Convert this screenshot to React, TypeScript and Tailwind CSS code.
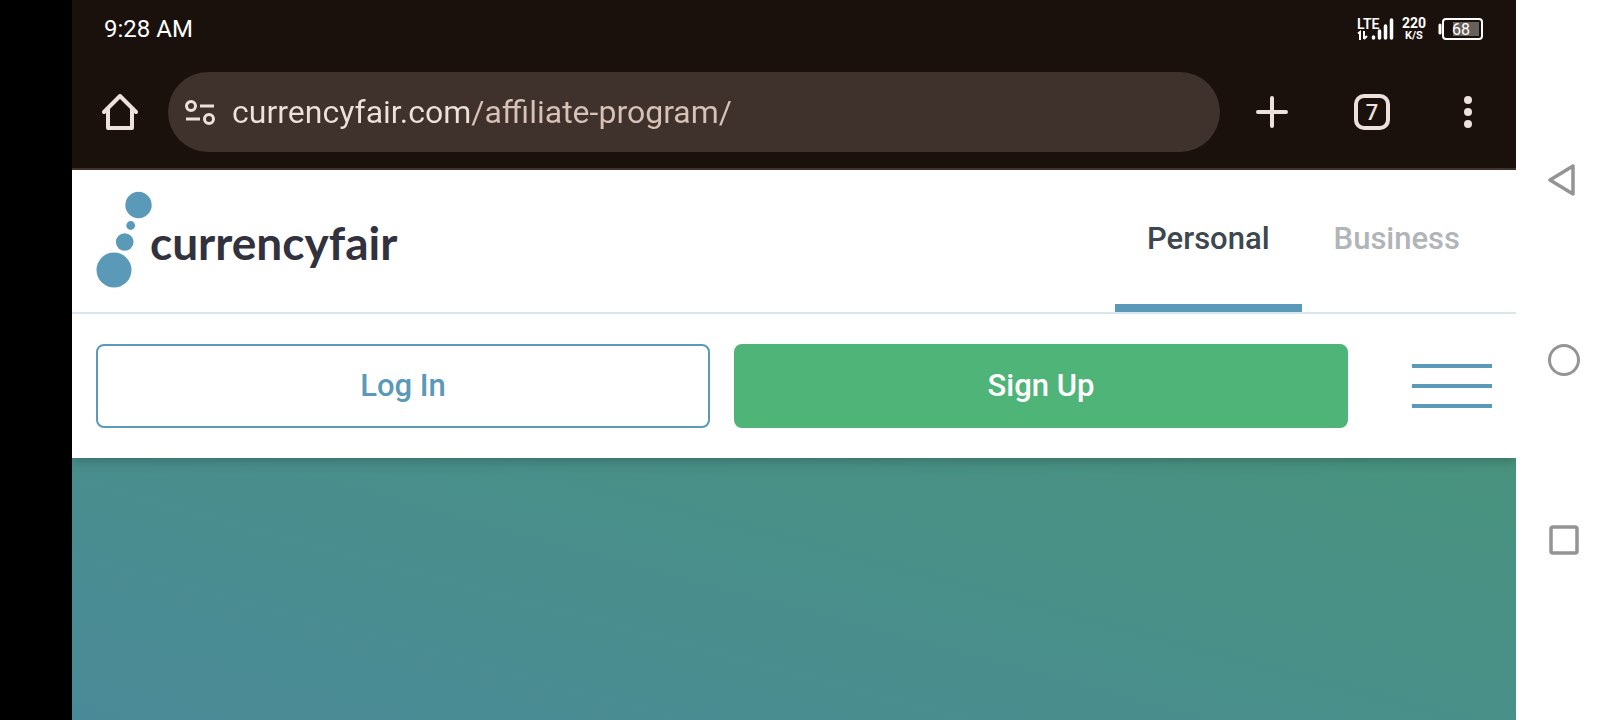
import React, { useState } from 'react';

type Account = 'Personal' | 'Business';

const accounts: Account[] = ['Personal', 'Business'];

const StatusBar: React.FC = () => (
  <div className="flex h-14 items-center justify-between px-8 pt-0.5 text-white">
    <span className="text-2xl">9:28 AM</span>
    <div className="flex items-center gap-2">
      <svg width="38" height="26" viewBox="0 0 38 26" aria-label="LTE signal">
        <text x="1" y="13" fill="#fff" fontSize="14" fontWeight="600" className="font-['Roboto',sans-serif]">LTE</text>
        <g stroke="#fff" strokeWidth="2" fill="none">
          <path d="M2 17.500l2-1.500v8M8 15v8M11 20l-3 3" />
        </g>
        <g stroke="#fff" strokeWidth="3.500" strokeLinecap="round">
          <path d="M17.500 21v1M23.500 15v7M29.500 10v12M35.500 4v18" />
        </g>
      </svg>
      <div className="flex flex-col items-center font-bold">
        <span className="text-[14px] leading-[13px]">220</span>
        <span className="text-[11px] leading-[11px]">K/S</span>
      </div>
      <svg width="46" height="24" viewBox="0 0 46 24" aria-label="Battery 68%" className="ml-1">
        <path d="M2 8v8" stroke="#fff" strokeWidth="3" strokeLinecap="round" />
        <rect x="5" y="2" width="39" height="20" rx="3" fill="none" stroke="#fff" strokeWidth="2" />
        <rect x="15" y="5" width="26" height="14" fill="#675f5c" />
        <text x="23" y="18" fill="#fff" fontSize="16" textAnchor="middle" className="font-['Roboto',sans-serif]">68</text>
      </svg>
    </div>
  </div>
);

const BrowserBar: React.FC = () => {
  const [url, setUrl] = useState<string>('currencyfair.com/affiliate-program/');

  return (
    <div className="flex items-center border-b-2 border-[#40322b] py-4 text-[#eee0db]">
      <button type="button" aria-label="Home" className="flex w-24 justify-center">
        <svg width="36" height="36" viewBox="0 0 36 36" fill="none" stroke="currentColor" strokeWidth="4" strokeLinecap="round" strokeLinejoin="round">
          <path d="M2 18L18 2l16 16M6 15v19h24V15" />
        </svg>
      </button>
      <div className="flex h-20 flex-1 items-center gap-4 rounded-full bg-[#3f312b] pl-4 pr-8">
        <svg width="32" height="28" viewBox="0 0 32 28" fill="none" stroke="currentColor" strokeWidth="3" aria-hidden="true">
          <circle cx="7" cy="8" r="4.500" />
          <path d="M16 8h14M2 21h14" />
          <circle cx="25" cy="21" r="4.500" />
        </svg>
        {/* the host is drawn lighter than the path */}
        <input
          type="text"
          aria-label="Address"
          value={url}
          onChange={(e) => setUrl(e.target.value)}
          className="h-12 min-w-0 flex-1 bg-[linear-gradient(90deg,#eee0db_240px,#d8c2b8_240px)] bg-clip-text text-[32px] text-transparent caret-white outline-none"
        />
      </div>
      <div className="flex w-[296px] items-center justify-between px-9">
        <button type="button" aria-label="New tab">
          <svg width="32" height="32" viewBox="0 0 32 32" stroke="currentColor" strokeWidth="4" strokeLinecap="round">
            <path d="M16 2v28M2 16h28" />
          </svg>
        </button>
        <button type="button" aria-label="Switch tabs" className="flex size-9 items-center justify-center rounded-[10px] border-4 border-current text-[22px] font-medium">
          7
        </button>
        <button type="button" aria-label="More options" className="flex w-6 justify-center">
          <svg width="12" height="32" viewBox="0 0 12 32" fill="currentColor">
            <circle cx="6" cy="4" r="4" />
            <circle cx="6" cy="16" r="4" />
            <circle cx="6" cy="28" r="4" />
          </svg>
        </button>
      </div>
    </div>
  );
};

const Logo: React.FC = () => (
  <a href="#" className="flex items-center">
    <svg width="54" height="96" viewBox="0 0 54 96" fill="#5a9ab8" className="shrink-0 overflow-visible" aria-hidden="true">
      <circle cx="42.500" cy="12" r="13.200" />
      <circle cx="34.700" cy="32.500" r="4.400" />
      <circle cx="28.700" cy="49" r="8.800" />
      <circle cx="18" cy="77" r="17.500" />
    </svg>
    <span className="pt-1 text-[46px] leading-none font-bold text-[#32323e] font-['Lato',sans-serif]">currencyfair</span>
  </a>
);

const SiteHeader: React.FC = () => {
  const [account, setAccount] = useState<Account>('Personal');

  return (
    <header className="relative bg-white shadow-[0_2px_12px_rgba(0,0,0,0.25)]">
      <div className="flex h-36 items-stretch justify-between border-b-2 border-[#d8e6ed] px-6">
        <Logo />
        <nav className="flex text-[31px] font-medium">
          {accounts.map((name) => (
            <button
              key={name}
              type="button"
              onClick={() => setAccount(name)}
              className={
                account === name
                  ? 'border-b-8 border-[#5a9ab8] px-8 pt-1 text-[#3d474f]'
                  : 'border-b-8 border-transparent px-8 pt-1 text-[#b1b5b9]'
              }
            >
              {name}
            </button>
          ))}
        </nav>
      </div>
      <div className="flex h-36 items-center gap-6 px-6 text-[31px] font-medium">
        <button type="button" className="h-21 flex-1 rounded-lg border-2 border-[#5a9ab8] text-[#5a9ab8]">
          Log In
        </button>
        <button type="button" className="h-21 flex-1 rounded-lg border-2 border-[#4fb477] bg-[#4fb477] text-white">
          Sign Up
        </button>
        <button type="button" aria-label="Menu" className="ml-10 flex w-20 flex-col gap-4">
          <span className="h-1 w-full bg-[#5a9ab8]" />
          <span className="h-1 w-full bg-[#5a9ab8]" />
          <span className="h-1 w-full bg-[#5a9ab8]" />
        </button>
      </div>
    </header>
  );
};

const SystemNav: React.FC = () => (
  <nav className="sticky top-0 flex h-screen w-24 flex-col bg-white py-[12.5vh] text-[#949494]">
    <button type="button" aria-label="Back" className="flex flex-1 items-center justify-center">
      <svg width="32" height="32" viewBox="0 0 32 32" fill="none" stroke="currentColor" strokeWidth="3.500" strokeLinejoin="round">
        <path d="M2 16L25 2v28z" />
      </svg>
    </button>
    <button type="button" aria-label="Home screen" className="flex flex-1 items-center justify-center">
      <svg width="32" height="32" viewBox="0 0 32 32" fill="none" stroke="currentColor" strokeWidth="3">
        <circle cx="16" cy="16" r="14.500" />
      </svg>
    </button>
    <button type="button" aria-label="Recent apps" className="flex flex-1 items-center justify-center">
      <svg width="32" height="32" viewBox="0 0 32 32" fill="none" stroke="currentColor" strokeWidth="3.500">
        <rect x="3" y="3" width="26" height="26" rx="2" />
      </svg>
    </button>
  </nav>
);

const App: React.FC = () => (
  <div className="flex min-h-screen bg-black font-['Roboto',sans-serif]">
    <div className="w-18 shrink-0" />
    <main className="flex min-w-0 flex-1 flex-col overflow-x-clip">
      <div className="relative z-10 bg-[#1b110c]">
        <StatusBar />
        <BrowserBar />
      </div>
      <SiteHeader />
      <section className="flex-1 bg-[linear-gradient(15deg,#4a8a98,#48937e)]" />
    </main>
    <SystemNav />
  </div>
);

export default App;
